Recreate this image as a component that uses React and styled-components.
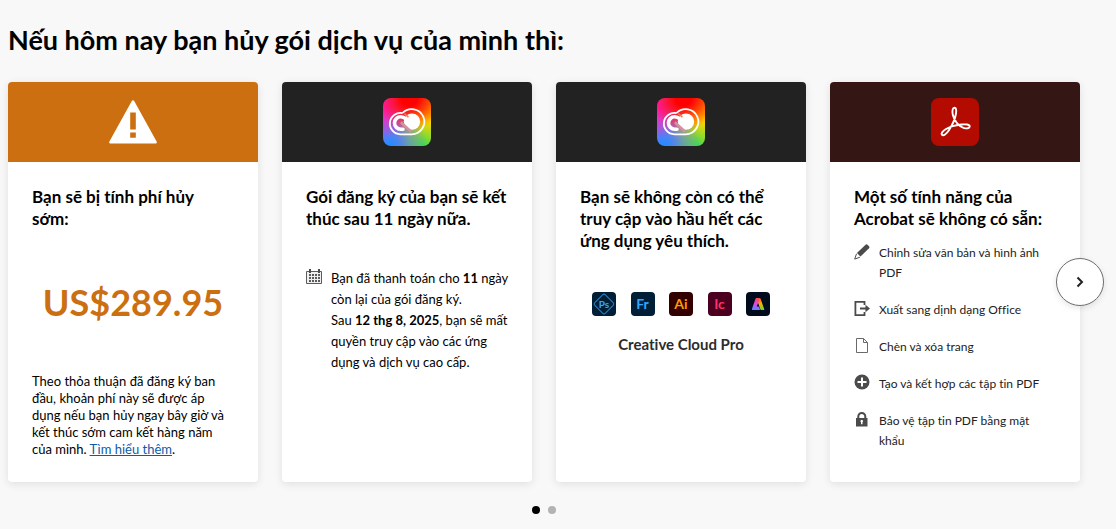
import React, { useState } from 'react';
import styled, { createGlobalStyle } from 'styled-components';

const GlobalStyle = createGlobalStyle`
  * {
    box-sizing: border-box;
  }

  body {
    margin: 0;
    background-color: #f8f8f8;
    color: #000;
    font-family: Lato, "Noto Sans", sans-serif;
    font-variant-ligatures: none;
  }
`;

const Page = styled.main`
  padding: 23px 36px 12px 8px;
`;

const Heading = styled.h1`
  margin: 0 0 25px;
  font-size: 27px;
  line-height: 34px;
  font-weight: 700;
`;

const Carousel = styled.section`
  position: relative;
`;

const CardList = styled.div`
  display: grid;
  grid-template-columns: repeat(4, 1fr);
  gap: 24px;
`;

const Card = styled.article`
  display: flex;
  flex-direction: column;
  min-height: 400px;
  border-radius: 4px;
  overflow: hidden;
  background-color: #fff;
  box-shadow: 0 2px 8px rgba(0, 0, 0, 0.1);
`;

const Banner = styled.div`
  display: flex;
  align-items: center;
  justify-content: center;
  height: 80px;
  background-color: ${props => props.$color};
`;

const CardBody = styled.div`
  display: flex;
  flex: 1;
  flex-direction: column;
  padding: 24px;
`;

const CardTitle = styled.h2`
  margin: 0;
  font-size: 17px;
  line-height: 22px;
  font-weight: 700;
`;

const Price = styled.p`
  display: flex;
  flex: 1;
  align-items: center;
  justify-content: center;
  margin: 0;
  color: #cb6f10;
  font-size: 36px;
  font-weight: 700;
`;

const Terms = styled.p`
  margin: 0;
  font-size: 13px;
  line-height: 17px;
`;

const Link = styled.a`
  color: #0d5ba6;
`;

const Plan = styled.div`
  display: flex;
  gap: 9px;
  margin-top: 38px;
  font-size: 13px;
  line-height: 21px;

  svg {
    flex: none;
  }

  p {
    margin: 0;
  }
`;

const Apps = styled.div`
  display: flex;
  justify-content: space-between;
  margin-top: 40px;
  padding: 0 12px;
`;

const AppTile = styled.span`
  display: flex;
  align-items: center;
  justify-content: center;
  width: 24px;
  height: 24px;
  border-radius: 4px;
  background-color: ${props => props.$bg};
  color: ${props => props.$color};
  font-size: ${props => (props.$small ? '10px' : '14px')};
  line-height: 24px;
  font-weight: 700;
`;

const DiamondTile = styled(AppTile)`
  position: relative;

  svg {
    position: absolute;
    inset: 0;
  }
`;

const AppsLabel = styled.p`
  margin: 18px 0 0;
  color: #2c2c2c;
  font-size: 15px;
  line-height: 20px;
  font-weight: 700;
  text-align: center;
`;

const Features = styled.ul`
  display: flex;
  flex-direction: column;
  gap: 17px;
  margin: 13px 0 0;
  padding: 0;
  list-style: none;
`;

const Feature = styled.li`
  display: flex;
  gap: 9px;
  color: #222;
  font-size: 12px;
  line-height: 20px;

  svg {
    flex: none;
  }
`;

const LogoTile = styled.div`
  width: 48px;
  height: 48px;
  border-radius: 8px;
  background: ${props => props.$bg};

  svg {
    display: block;
  }
`;

const NextButton = styled.button`
  position: absolute;
  top: 176px;
  right: -24px;
  display: flex;
  align-items: center;
  justify-content: center;
  width: 48px;
  height: 48px;
  padding: 0;
  border: 1px solid #6e6e6e;
  border-radius: 50%;
  background-color: #fff;
  box-shadow: 0 2px 6px rgba(0, 0, 0, 0.1);
  cursor: pointer;
`;

const Dots = styled.div`
  display: flex;
  justify-content: center;
  gap: 8px;
  margin-top: 24px;
`;

const Dot = styled.button`
  width: 8px;
  height: 8px;
  padding: 0;
  border: none;
  border-radius: 50%;
  background-color: ${props => (props.$active ? '#000' : '#b3b3b3')};
  cursor: pointer;
`;

const ccGradient = `
  radial-gradient(circle at 55% 0%, #f00 15%, rgba(255, 0, 0, 0) 60%),
  radial-gradient(circle at 0% 20%, #ff1fb8 0%, rgba(255, 31, 184, 0) 50%),
  radial-gradient(circle at 15% 100%, #2a8bff 5%, rgba(42, 139, 255, 0) 60%),
  radial-gradient(circle at 85% 100%, #3fdf4b 0%, rgba(63, 223, 75, 0) 40%),
  radial-gradient(circle at 100% 65%, #ffd400 15%, rgba(255, 212, 0, 0) 60%),
  linear-gradient(90deg, #d84cf0, #f0885c 55%, #ff7a00)
`;

const WarningIcon = () => (
    <svg width="48" height="44" viewBox="0 0 48 44" aria-hidden="true">
        <path fill="#fff" fillRule="evenodd" d="M22.8.9a1.4 1.4 0 0 1 2.4 0l22.4 40.6a1.4 1.4 0 0 1-1.2 2.1H1.6a1.4 1.4 0 0 1-1.2-2.1zM21.2 12.6v16.8h5.6V12.6zm0 20v5.2h5.6v-5.2z" />
    </svg>
);

const CreativeCloudLogo = () => (
    <LogoTile $bg={ccGradient}>
        <svg width="48" height="48" viewBox="0 0 48 48" fill="none" stroke="#fff" aria-hidden="true">
            <path strokeWidth="1.8" d="M19.6 15a12.6 12.6 0 1 1 9.2 21.3H17.4a10.7 10.7 0 1 1 2.2-21.2" />
            <circle cx="29" cy="23.6" r="8.2" fill="#fff" stroke="none" />
            <path stroke="#f07a55" strokeWidth="1.6" d="m21.4 15.6 4 3.600" />
            <path strokeWidth="3.6" strokeLinecap="round" d="M20 31.2h-2.300a6.200 6.200 0 0 1 0-12.400c2.400 0 3.800.9 5.200 2.200l6 5.600" />
            <path stroke="#d293a0" strokeWidth="2.6" strokeLinecap="round" d="m18.600 25 8.800 8" />
        </svg>
    </LogoTile>
);

const AcrobatLogo = () => (
    <LogoTile $bg="#b30b00">
        <svg width="48" height="48" viewBox="0 0 48 48" fill="none" stroke="#fff" aria-hidden="true">
            <path
                strokeWidth="1.9"
                strokeLinejoin="round"
                d="M23.5 9.800c-2 0-2.500 3.300-1.700 7 1.200 5.500 5.600 11.400 10.700 13 3.300 1.100 6.200.6 6.200-1.300 0-2.200-4.100-2.400-8.300-2-5.200.5-11.800 2.300-15.800 4.800-3.200 2-4.800 4.300-3.600 5.500 1.400 1.400 4.400-.7 6.900-4.500 3.100-4.800 6.300-11.500 7.100-16.800.5-3.300.2-5.700-1.500-5.700z"
            />
        </svg>
    </LogoTile>
);

const CalendarIcon = () => (
    <svg width="16" height="18" viewBox="0 0 16 18" aria-hidden="true">
        <path fill="#f0f0f0" stroke="#5c5c5c" d="M.5 3.5h15v12H.5z" />
        <path stroke="#4b4b4b" strokeWidth="2" d="M4 1v4M13 1v4" />
        <path stroke="#5c5c5c" strokeWidth="2" strokeDasharray="2 1" d="M3 7h11M3 10h11M3 13h11" />
    </svg>
);

const PencilIcon = () => (
    <svg width="16" height="18" viewBox="0 0 16 18" aria-hidden="true">
        <path fill="#4b4b4b" d="M11.6 1.8a1.4 1.4 0 0 1 1.9 0l1.5 1.5a1.4 1.4 0 0 1 0 1.9L6.5 13.6 2.9 10.1z" />
        <path fill="none" stroke="#4b4b4b" d="m2.5 10.8-1.8 5.3 5.2-1.9" />
    </svg>
);

const ExportIcon = () => (
    <svg width="16" height="18" viewBox="0 0 16 18" fill="none" stroke="#4b4b4b" aria-hidden="true">
        <path strokeWidth="1.8" d="M10.5 5V1.900H1.400v13.200h9.100V12" />
        <path strokeWidth="1.8" d="M6 8.5h8" />
        <path fill="#4b4b4b" stroke="none" d="M11.5 4.7 16 8.5l-4.500 3.800z" />
    </svg>
);

const PageIcon = () => (
    <svg width="16" height="18" viewBox="0 0 16 18" fill="none" stroke="#6a6a6a" aria-hidden="true">
        <path d="M2.5 1.5h7l4 4v10h-11zM9.500 1.500v4h4" />
    </svg>
);

const AddIcon = () => (
    <svg width="16" height="18" viewBox="0 0 16 18" aria-hidden="true">
        <circle cx="8" cy="8" r="7.5" fill="#4b4b4b" />
        <path stroke="#fff" strokeWidth="2" d="M8 3.5v9M3.500 8h9" />
    </svg>
);

const LockIcon = () => (
    <svg width="16" height="18" viewBox="0 0 16 18" aria-hidden="true">
        <path fill="none" stroke="#4b4b4b" strokeWidth="2" d="M4.3 8V5.500a3.500 3.500 0 0 1 7 0V8" />
        <path fill="#4b4b4b" fillRule="evenodd" d="M2 7h11.500v8.500H2zM7 13.300h1.500v-2a1.300 1.300 0 1 0-1.500 0z" />
    </svg>
);

const DiamondOutline = () => (
    <svg width="24" height="24" viewBox="0 0 24 24" aria-hidden="true">
        <rect x="4.5" y="4.5" width="15" height="15" rx="2" fill="none" stroke="#2a7fc0" transform="rotate(45 12 12)" />
    </svg>
);

const ExpressMark = () => (
    <svg width="24" height="24" viewBox="0 0 24 24" fill="none" aria-hidden="true">
        <defs>
            <linearGradient id="expressLeft" x1="11" y1="5" x2="8" y2="18" gradientUnits="userSpaceOnUse">
                <stop offset="0" stopColor="#ff4a3d" />
                <stop offset="0.5" stopColor="#e445e8" />
                <stop offset="1" stopColor="#4d8dff" />
            </linearGradient>
            <linearGradient id="expressRight" x1="12" y1="5" x2="17" y2="18" gradientUnits="userSpaceOnUse">
                <stop offset="0" stopColor="#ff3b30" />
                <stop offset="0.5" stopColor="#ffb000" />
                <stop offset="1" stopColor="#59d84b" />
            </linearGradient>
        </defs>
        <path fill="url(#expressRight)" d="M10.5 6h3q.8 0 1.100.8L18.200 17q.3 1-.7 1h-2.200q-.8 0-1-.8L11.800 10z" />
        <path fill="url(#expressLeft)" d="M10.3 6h2.400v3.800l-2 4.700h1.700q.6 0 .8.700l.8 2q.2.800-.6.800H6.600q-1 0-.7-1L9.500 6.700q.2-.7.800-.7z" />
    </svg>
);

const features = [
    { icon: PencilIcon, text: 'Chỉnh sửa văn bản và hình ảnh PDF' },
    { icon: ExportIcon, text: 'Xuất sang dịnh dạng Office' },
    { icon: PageIcon, text: 'Chèn và xóa trang' },
    { icon: AddIcon, text: 'Tạo và kết hợp các tập tin PDF' },
    { icon: LockIcon, text: 'Bảo vệ tập tin PDF bằng mật khẩu' },
];

const App = () => {
    const [slide, setSlide] = useState(0);

    return (
        <Page>
            <GlobalStyle />
            <Heading>Nếu hôm nay bạn hủy gói dịch vụ của mình thì:</Heading>
            <Carousel>
                <CardList>
                    <Card>
                        <Banner $color="#cb6f10"><WarningIcon /></Banner>
                        <CardBody>
                            <CardTitle>Bạn sẽ bị tính phí hủy sớm:</CardTitle>
                            <Price>US$289.95</Price>
                            <Terms>
                                Theo thỏa thuận đã đăng ký ban đầu, khoản phí này sẽ được áp dụng nếu bạn hủy ngay
                                bây giờ và kết thúc sớm cam kết hàng năm của mình. <Link href="#terms">Tìm hiểu thêm</Link>.
                            </Terms>
                        </CardBody>
                    </Card>

                    <Card>
                        <Banner $color="#222"><CreativeCloudLogo /></Banner>
                        <CardBody>
                            <CardTitle>Gói đăng ký của bạn sẽ kết thúc sau 11 ngày nữa.</CardTitle>
                            <Plan>
                                <CalendarIcon />
                                <div>
                                    <p>Bạn đã thanh toán cho <b>11</b> ngày còn lại của gói đăng ký.</p>
                                    <p>Sau <b>12 thg 8, 2025</b>, bạn sẽ mất quyền truy cập vào các ứng dụng và dịch vụ cao cấp.</p>
                                </div>
                            </Plan>
                        </CardBody>
                    </Card>

                    <Card>
                        <Banner $color="#222"><CreativeCloudLogo /></Banner>
                        <CardBody>
                            <CardTitle>Bạn sẽ không còn có thể truy cập vào hầu hết các ứng dụng yêu thích.</CardTitle>
                            <Apps>
                                <DiamondTile $bg="#001e36" $color="#31a8ff" $small>
                                    <DiamondOutline />
                                    Ps
                                </DiamondTile>
                                <AppTile $bg="#001e36" $color="#31a8ff">Fr</AppTile>
                                <AppTile $bg="#330000" $color="#ff9a00">Ai</AppTile>
                                <AppTile $bg="#4b0020" $color="#ff3366">Ic</AppTile>
                                <AppTile $bg="#000b1d"><ExpressMark /></AppTile>
                            </Apps>
                            <AppsLabel>Creative Cloud Pro</AppsLabel>
                        </CardBody>
                    </Card>

                    <Card>
                        <Banner $color="#341714"><AcrobatLogo /></Banner>
                        <CardBody>
                            <CardTitle>Một số tính năng của Acrobat sẽ không có sẵn:</CardTitle>
                            <Features>
                                {features.map(({ icon: Icon, text }) => (
                                    <Feature key={text}>
                                        <Icon />
                                        <span>{text}</span>
                                    </Feature>
                                ))}
                            </Features>
                        </CardBody>
                    </Card>
                </CardList>
                <NextButton type="button" aria-label="Tiếp theo" onClick={() => setSlide(1)}>
                    <svg width="10" height="12" viewBox="0 0 10 12" fill="none" stroke="#222" strokeWidth="2" aria-hidden="true">
                        <path d="m2.5 1.5 4.500 4.500-4.500 4.500" />
                    </svg>
                </NextButton>
            </Carousel>
            <Dots>
                {[0, 1].map((index) => (
                    <Dot
                        key={index}
                        type="button"
                        aria-label={`Trang ${index + 1}`}
                        $active={slide === index}
                        onClick={() => setSlide(index)}
                    />
                ))}
            </Dots>
        </Page>
    );
};

export default App;
